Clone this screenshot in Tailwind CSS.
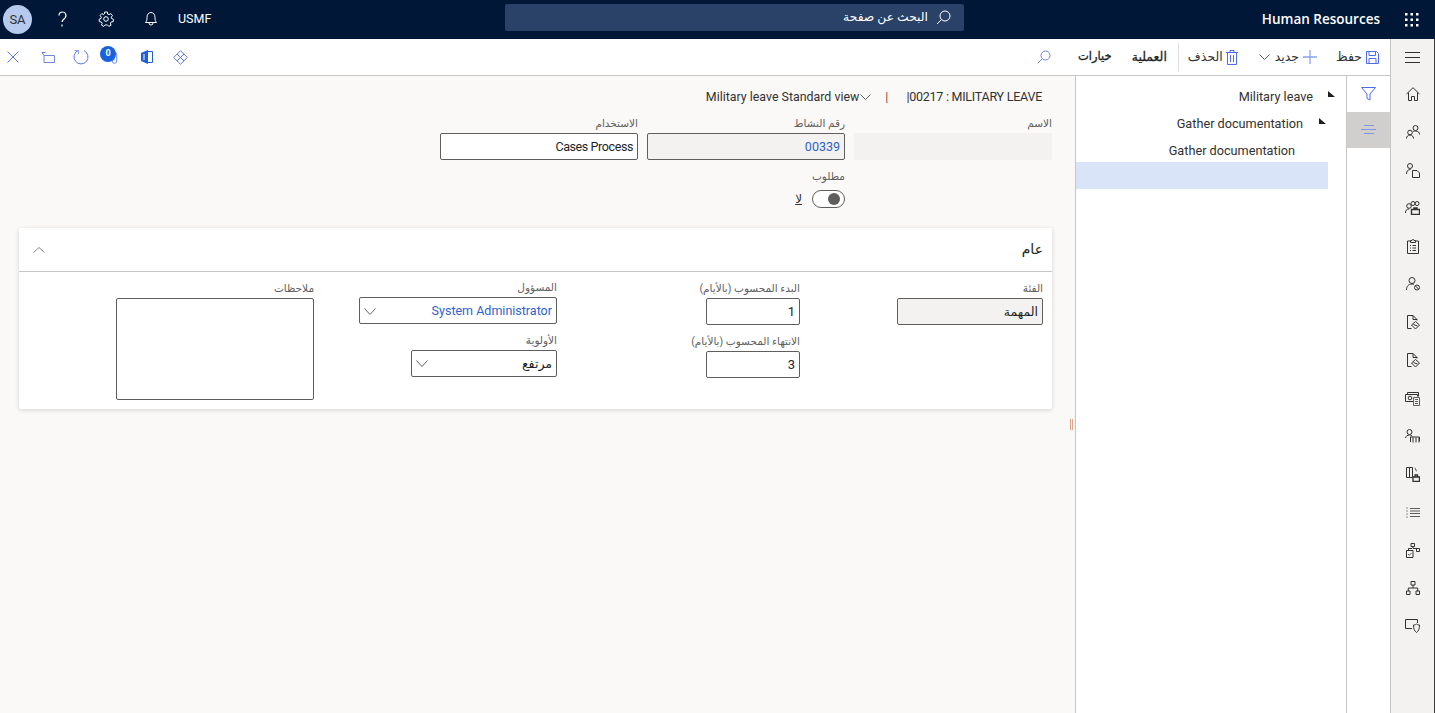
<!doctype html>
<html lang="ar">
<head>
<meta charset="utf-8">
<script src="https://cdn.jsdelivr.net/npm/@tailwindcss/browser@4"></script>
<title>Human Resources</title>
</head>
<body class="m-0 overflow-hidden bg-white font-['Roboto','DejaVu_Sans',sans-serif] text-[13px] text-[#323130]">
<div class="flex h-[713px] w-[1435px] flex-col overflow-hidden">

  <!-- top bar -->
  <header class="relative flex h-[39px] shrink-0 items-center bg-[#001737] text-white">
    <div class="ml-[3px] flex h-[29px] w-[29px] items-center justify-center rounded-full bg-[#b6c9ef] text-[13px] text-[#323130]">SA</div>
    <svg class="mb-[1px] ml-[24px] h-[16px] w-[12px]" viewBox="0 0 12 16" fill="none" stroke="currentColor" stroke-width="1.200"><path d="M3 4.500C3 2 4.500 1 6.500 1c3 0 4.300 3 2.800 5.500C8.300 8 6 9 6 11"/><path d="M6 13.500v2"/></svg>
    <svg class="mb-[1px] ml-[30px] h-[16px] w-[16px]" viewBox="0 0 16 16" fill="none" stroke="currentColor"><circle cx="8" cy="8" r="2.300"/><path d="M6.700 1h2.600l.4 2 1.300.6 1.800-1 1.700 2-1.200 1.500.3 1.400 1.900.8-.3 2.400-2 .3-.8 1.200.6 2-2.200 1.200-1.400-1.500H7.200l-1.400 1.500-2.200-1.200.6-2-.8-1.200-2-.3L1.100 8.300 3 7.500l.3-1.400L2.100 4.600l1.700-2 1.800 1L6.300 3z"/></svg>
    <svg class="mb-[2px] ml-[31px] h-[15px] w-[12px]" viewBox="0 0 12 15" fill="none" stroke="currentColor"><path d="M.5 11.500h11c-1.200-1.300-1.500-2.500-1.500-5 0-3-1.500-5-4-5s-4 2-4 5c0 2.500-.3 3.700-1.500 5z"/><path d="M4 11.500v.5a2 2 0 0 0 4 0v-.5"/></svg>
    <span class="ml-[21px] text-[12.500px]">USMF</span>
    <div class="absolute left-[505px] top-[4px] flex h-[27px] w-[459px] items-center justify-end gap-[8px] rounded-[2px] bg-[#2a4268] pr-[13px]" dir="ltr">
      <span dir="rtl" class="text-[12.300px] leading-none">البحث عن صفحة</span>
      <svg class="h-[15px] w-[15px]" viewBox="0 0 15 15" fill="none" stroke="currentColor"><circle cx="9" cy="6" r="5"/><path d="M5.500 9.500 1 14"/></svg>
    </div>
    <span class="ml-auto font-['Open_Sans'] text-[13.500px] font-semibold">Human Resources</span>
    <svg class="ml-[25px] mr-[16px] h-[14px] w-[14px]" viewBox="0 0 14 14" fill="currentColor"><rect x="0" y="0" width="2.500" height="2.500"/><rect x="5.500" y="0" width="2.500" height="2.500"/><rect x="11" y="0" width="2.500" height="2.500"/><rect x="0" y="5.500" width="2.500" height="2.500"/><rect x="5.500" y="5.500" width="2.500" height="2.500"/><rect x="11" y="5.500" width="2.500" height="2.500"/><rect x="0" y="11" width="2.500" height="2.500"/><rect x="5.500" y="11" width="2.500" height="2.500"/><rect x="11" y="11" width="2.500" height="2.500"/></svg>
  </header>

  <div class="flex min-h-0 flex-1">
    <div class="flex min-w-0 flex-1 flex-col">

      <!-- command bar -->
      <div class="flex h-[37px] shrink-0 items-center border-b border-[#c8c6c4] bg-white">
        <div class="flex items-center pl-[7px] text-[#4f6bed]">
          <svg class="h-[12px] w-[12px]" viewBox="0 0 12 12" fill="none" stroke="#5b78e5"><path d="M.5.500l11 11M11.500.500l-11 11"/></svg>
          <svg class="ml-[22px] h-[11px] w-[14px]" viewBox="0 0 14 11" fill="none" stroke="#6e86dd"><path d="M3 3.500h10.500v7H3z"/><path d="M3 3.500 1 .5h3.500" stroke="#5b78e5"/></svg>
          <svg class="ml-[18px] h-[16px] w-[16px]" viewBox="0 0 16 16" fill="none" stroke="#5b78e5"><path d="M5 1.600A7 7 0 1 0 11 1.600"/><path d="M5.500 1v4M1.500 1.500h4" stroke="#8ea2ec"/></svg>
          <div class="relative ml-[11px] h-[20px] w-[20px]">
            <span class="absolute left-0 top-[-1px] z-10 flex h-[16px] w-[16px] items-center justify-center rounded-full bg-[#1a62dc] text-[9px] font-bold text-white">0</span>
            <svg class="absolute left-[11px] top-[5px] h-[13px] w-[7px]" viewBox="0 0 8 14" fill="none" stroke="#5b78e5"><path d="M1.500 2v8a2.500 2.500 0 0 0 5 0V2a1.500 1.500 0 0 0-3 0v7"/></svg>
          </div>
          <svg class="ml-[21px] h-[14px] w-[12px]" viewBox="0 0 12 14"><path d="M0 3 7 0v14L0 11z" fill="#1f5fd6"/><path d="M7 1.500h4.500v11H7" fill="none" stroke="#1f5fd6"/><path d="M3 4v6" stroke="#fff"/></svg>
          <svg class="ml-[20px] h-[15px] w-[15px]" viewBox="0 0 15 15" fill="none" stroke="#5b78e5"><path d="M7.500.7 14.300 7.500 7.500 14.300.7 7.500z"/><path d="M4 4l7 7M11 4l-3 3M4 11l3-3"/></svg>
        </div>
        <div dir="rtl" class="ml-auto flex items-center pr-[11px]">
          <svg class="h-[13px] w-[13px]" viewBox="0 0 13 13" fill="none" stroke="#4f6bed"><path d="M.5.500h10l2 2v10H.5z"/><path d="M3 .5v4h6.500v-4M3 12.500v-5h7v5"/></svg>
          <span class="mr-[4px] text-[12.500px] leading-none">حفظ</span>
          <svg class="mr-[19px] h-[14px] w-[14px]" viewBox="0 0 14 14" stroke="#8aa3ee" fill="none" stroke-width="1.300"><path d="M7 0v14M0 7h14"/></svg>
          <span class="mr-[4px] text-[12.500px] leading-none">جديد</span>
          <svg class="mr-[5px] h-[6px] w-[11px]" viewBox="0 0 11 6" fill="none" stroke="#605e5c"><path d="M.5.500l5 5 5-5"/></svg>
          <svg class="mr-[21px] h-[15px] w-[12px]" viewBox="0 0 12 15" fill="none" stroke="#4f6bed"><path d="M0 2.500h12M4 2.500V.5h4v2M1.500 2.500h9v12h-9zM4.500 5v7M7.500 5v7"/></svg>
          <span class="mr-[3px] text-[12.500px] leading-none">الحذف</span>
          <span class="mr-[9px] h-[29px] w-px bg-[#e1dfdd]"></span>
          <span class="mr-[11px] text-[12.500px] leading-none text-[#201f1e] [-webkit-text-stroke:0.3px_#201f1e]">العملية</span>
          <span class="mr-[20px] text-[11.500px] leading-none text-[#201f1e] [-webkit-text-stroke:0.3px_#201f1e]">خيارات</span>
          <svg class="mr-[27px] h-[14px] w-[14px]" viewBox="0 0 14 14" fill="none" stroke="#6e86dd"><circle cx="8.500" cy="5.500" r="4.500"/><path d="M5 9 .7 13.300"/></svg>
        </div>
      </div>

      <div class="flex min-h-0 flex-1">
        <!-- main form -->
        <main dir="rtl" class="relative w-[1075px] shrink-0 bg-[#faf9f8] pr-[23px]">
          <div class="flex h-[40px] items-center pr-[10px] pt-[2px] text-[12.500px]">
            <span dir="ltr" class="tracking-[-0.25px]">|00217 : MILITARY LEAVE</span>
            <span class="mr-[18px] text-[#8a4a3a]">|</span>
            <span dir="ltr" class="mr-[14px] flex items-center gap-[1px] text-[12.400px]">Military leave Standard view
              <svg class="h-[6px] w-[11px]" viewBox="0 0 11 6" fill="none" stroke="#605e5c"><path d="M.5.500l5 5 5-5"/></svg>
            </span>
          </div>

          <div class="flex gap-[9px]">
            <div class="w-[198px]">
              <div class="h-[17px] text-[10.500px] leading-[16px] text-[#605e5c]">الاسم</div>
              <div class="h-[27px] w-[198px] bg-[#f3f2f1]"></div>
            </div>
            <div class="w-[198px]">
              <div class="h-[17px] text-[10.500px] leading-[16px] text-[#605e5c]">رقم النشاط</div>
              <div dir="ltr" class="flex h-[27px] items-center justify-end rounded-[2px] border border-[#605e5c] bg-[#f3f2f1] px-[4px] pt-[1px] text-[12.500px] text-[#2f5fd0]">00339</div>
            </div>
            <div class="w-[198px]">
              <div class="h-[17px] text-[10.500px] leading-[16px] text-[#605e5c]">الاستخدام</div>
              <div dir="ltr" class="flex h-[27px] items-center justify-end rounded-[2px] border border-[#605e5c] bg-white px-[4px] pt-[1px] text-[12.500px] tracking-[-0.4px] text-[#201f1e]">Cases Process</div>
            </div>
          </div>

          <div class="mr-[207px] mt-[9px]">
            <div class="h-[21px] text-[10.500px] leading-[16px] text-[#605e5c]">مطلوب</div>
            <div class="flex items-center gap-[10px]">
              <div class="flex h-[18px] w-[33px] items-center rounded-full border border-[#605e5c] bg-white pr-[4px]">
                <span class="h-[12px] w-[12px] rounded-full bg-[#605e5c]"></span>
              </div>
              <span class="text-[12px] underline">لا</span>
            </div>
          </div>

          <section class="mt-[20px] h-[181px] w-[1033px] rounded-[2px] bg-white shadow-[0_1px_4px_rgba(0,0,0,0.16)]">
            <div class="flex h-[44px] items-center justify-between border-b border-[#c8c6c4] pl-[14px] pr-[9px]">
              <span class="text-[14px] text-[#201f1e]">عام</span>
              <svg class="h-[6px] w-[12px]" viewBox="0 0 12 6" fill="none" stroke="#8a8886"><path d="M.5 5.500l5.500-5 5.500 5"/></svg>
            </div>
            <div class="flex gap-[45px] pr-[9px] pt-[8px]">
              <div class="w-[198px]">
                <div class="h-[18px] text-[10.500px] leading-[18px] text-[#605e5c]">الفئة</div>
                <div class="flex h-[27px] w-[146px] items-center rounded-[2px] border border-[#605e5c] bg-[#f3f2f1] px-[4px] pt-[1px] text-[12.500px] text-[#201f1e]">المهمة</div>
              </div>
              <div class="w-[198px]">
                <div class="h-[18px] text-[10.500px] leading-[18px] text-[#605e5c]">البدء المحسوب (بالأيام)</div>
                <div dir="ltr" class="flex h-[27px] w-[94px] items-center justify-end rounded-[2px] border border-[#605e5c] bg-white px-[4px] pt-[1px] text-[13px] text-[#201f1e]">1</div>
                <div class="mt-[8px] h-[18px] text-[10.500px] leading-[18px] text-[#605e5c]">الانتهاء المحسوب (بالأيام)</div>
                <div dir="ltr" class="flex h-[27px] w-[94px] items-center justify-end rounded-[2px] border border-[#605e5c] bg-white px-[4px] pt-[1px] text-[13px] text-[#201f1e]">3</div>
              </div>
              <div class="w-[198px]">
                <div class="h-[17px] text-[10.500px] leading-[16px] text-[#605e5c]">المسؤول</div>
                <div dir="ltr" class="flex h-[27px] items-center justify-between rounded-[2px] border border-[#605e5c] bg-white pl-[4px] pr-[4px] pt-[1px] text-[12.500px] text-[#2f5fd0]">
                  <svg class="h-[7px] w-[12px]" viewBox="0 0 12 7" fill="none" stroke="#605e5c"><path d="M.5.500l5.500 6 5.500-6"/></svg>
                  <span>System Administrator</span>
                </div>
                <div class="mt-[9px] h-[17px] text-[10.500px] leading-[16px] text-[#605e5c]">الأولوية</div>
                <div dir="ltr" class="flex h-[27px] w-[146px] items-center justify-between rounded-[2px] border border-[#605e5c] bg-white px-[4px] text-[12.500px] text-[#201f1e]">
                  <svg class="h-[7px] w-[12px]" viewBox="0 0 12 7" fill="none" stroke="#605e5c"><path d="M.5.500l5.500 6 5.500-6"/></svg>
                  <span dir="rtl" class="pt-[2px]">مرتفع</span>
                </div>
              </div>
              <div class="w-[198px]">
                <div class="h-[18px] text-[10.500px] leading-[18px] text-[#605e5c]">ملاحظات</div>
                <div class="h-[102px] rounded-[2px] border border-[#605e5c] bg-white"></div>
              </div>
            </div>
          </section>

          <div class="absolute left-[1070px] top-[343px] flex gap-[1px]">
            <span class="h-[11px] w-[1px] bg-[#e2a68c]"></span><span class="h-[11px] w-[1px] bg-[#e2a68c]"></span>
          </div>
        </main>

        <!-- tree panel -->
        <aside class="w-[271px] shrink-0 border-l border-[#c8c6c4] bg-white pt-[5px] text-[12.700px]">
          <div class="flex h-[27px] items-center justify-end pr-[11px] pt-[4px]">
            <span>Military leave</span>
            <svg class="mb-[6px] ml-[15px] h-[6px] w-[7px]" viewBox="0 0 7 6" fill="#201f1e"><path d="M0 0 7 6H0z"/></svg>
          </div>
          <div class="flex h-[27px] items-center justify-end pr-[20px] pt-[4px]">
            <span>Gather documentation</span>
            <svg class="mb-[6px] ml-[16px] h-[6px] w-[7px]" viewBox="0 0 7 6" fill="#201f1e"><path d="M0 0 7 6H0z"/></svg>
          </div>
          <div class="flex h-[27px] items-center justify-end pr-[51px] pt-[4px]">
            <span>Gather documentation</span>
          </div>
          <div class="h-[27px] w-[252px] bg-[#d9e4f9]"></div>
        </aside>

        <!-- side tabs -->
        <div class="w-[44px] shrink-0 border-l border-[#c8c6c4] bg-white">
          <div class="flex h-[36px] items-center justify-center">
            <svg class="h-[14px] w-[15px]" viewBox="0 0 15 14" fill="none" stroke="#4f6bed"><path d="M.5.500h14L9 7v6L6 11.500V7z"/></svg>
          </div>
          <div class="flex h-[36px] items-center justify-center bg-[#d0cfce]">
            <svg class="h-[10px] w-[15px]" viewBox="0 0 15 10" fill="none" stroke="#7f95e8"><path d="M3 .5h10M0 4.500h15M3 8.500h10"/></svg>
          </div>
        </div>
      </div>
    </div>

    <!-- nav rail -->
    <nav class="flex w-[45px] shrink-0 flex-col items-center border-l border-r border-l-[#c8c6c4] border-r-[#3b3a39] bg-[#f3f2f1] text-[#323130]">
      <div class="flex h-[36px] w-full items-center justify-center">
        <svg class="h-[11px] w-[15px]" viewBox="0 0 15 11" fill="none" stroke="currentColor"><path d="M0 .5h15M0 5.500h15M0 10.500h15"/></svg>
      </div>
      <div class="flex h-[38px] items-center justify-center">
        <svg class="h-[14px] w-[14px]" viewBox="0 0 14 14" fill="none" stroke="currentColor"><path d="M.5 7 7 .7 13.500 7M2.500 5.500v8h3v-4h3v4h3v-8"/></svg>
      </div>
      <div class="flex h-[38px] items-center justify-center">
        <svg class="h-[14px] w-[14px]" viewBox="0 0 14 14" fill="none" stroke="currentColor"><circle cx="9.500" cy="3" r="2.500"/><circle cx="4" cy="7.500" r="2.300"/><path d="M.5 13.500c0-2 1.500-3.500 3.500-3.500s3.500 1.500 3.500 3.500M7 6.500c2-1 4-.5 5.500.5.800.6 1 1.500 1 2.500"/></svg>
      </div>
      <div class="flex h-[38px] items-center justify-center">
        <svg class="h-[15px] w-[14px]" viewBox="0 0 14 15" fill="none" stroke="currentColor"><circle cx="4" cy="3" r="2.500"/><path d="M.5 11c0-3 1.500-4.500 4-4.500M6.500 7.500H11l2.500 2.500v4.500h-7z"/></svg>
      </div>
      <div class="flex h-[38px] items-center justify-center">
        <svg class="h-[14px] w-[15px]" viewBox="0 0 15 14" fill="none" stroke="currentColor"><circle cx="4" cy="5" r="2.300"/><circle cx="8" cy="2.500" r="2"/><circle cx="12" cy="2.500" r="2"/><path d="M.5 12c0-2.500 1-4 3.500-4"/><path d="M6.500 8.500h8v5h-8zM9 8.500V7h3v1.500" stroke-width="1.400"/></svg>
      </div>
      <div class="flex h-[38px] items-center justify-center">
        <svg class="h-[15px] w-[12px]" viewBox="0 0 12 15" fill="none" stroke="currentColor"><path d="M3.500 2H.5v12.500h11V2h-3"/><path d="M3.500 3.500V1.500h1.500a1 1 0 0 1 2 0h1.500v2z"/><path d="M3 6.500h1M5.500 6.500H9M3 9h1M5.500 9H9M3 11.500h1M5.500 11.500H9"/></svg>
      </div>
      <div class="flex h-[38px] items-center justify-center">
        <svg class="h-[14px] w-[14px]" viewBox="0 0 14 14" fill="none" stroke="currentColor"><circle cx="6" cy="3.500" r="3"/><path d="M.5 13c0-3.500 2-6 5.500-6 1 0 1.500.2 2 .5"/><circle cx="11" cy="10.500" r="2.500"/><path d="M9.500 9l3 3"/></svg>
      </div>
      <div class="flex h-[38px] items-center justify-center">
        <svg class="h-[15px] w-[14px]" viewBox="0 0 14 15" fill="none" stroke="currentColor"><path d="M5.500 13.500h-4V.5H7l4 4v1M7 .5v4h4"/><path d="M9.500 6.500l4 3.500-4 4-4-4zM7.500 9.500l4 1.500" /></svg>
      </div>
      <div class="flex h-[38px] items-center justify-center">
        <svg class="h-[15px] w-[14px]" viewBox="0 0 14 15" fill="none" stroke="currentColor"><path d="M5.500 13.500h-4V.5H7l4 4v1M7 .5v4h4"/><path d="M9.500 6.500l4 3.500-4 4-4-4zM7.500 9.500l4 1.500" /></svg>
      </div>
      <div class="flex h-[38px] items-center justify-center">
        <svg class="h-[15px] w-[15px]" viewBox="0 0 15 15" fill="none" stroke="currentColor"><path d="M8 10.500H.5v-7h12v2"/><path d="M2.500 3.500v-2h11v4"/><circle cx="5" cy="7" r="1.800"/><path d="M8.500 6.500h6v8h-6zM10 8.500h3M10 10.500h3M10 12.500h3" stroke="#605e5c"/></svg>
      </div>
      <div class="flex h-[38px] items-center justify-center">
        <svg class="h-[14px] w-[15px]" viewBox="0 0 15 14" fill="none" stroke="currentColor"><circle cx="4.500" cy="3" r="2.500"/><path d="M.5 9c.5-2 2-3 4-3 1.500 0 2.500.5 3 1.500M5 8h9.500v4M5.500 8v5M8 8.500v5M11 8.500v5M14 8.500v5"/></svg>
      </div>
      <div class="flex h-[38px] items-center justify-center">
        <svg class="h-[15px] w-[14px]" viewBox="0 0 14 15" fill="none" stroke="currentColor"><path d="M.5.500h3v10h-3zM3.500.5h3v10h-3z"/><path d="M9 .8l1.500 3.500" stroke="#605e5c"/><path d="M7 10h6.500v4.500H7zM9 10V8h2.500v2" stroke-width="1.300"/></svg>
      </div>
      <div class="flex h-[38px] items-center justify-center">
        <svg class="h-[11px] w-[14px]" viewBox="0 0 14 11" fill="none" stroke="currentColor"><path d="M4 1.500h10M4 4h10M4 6.500h10M4 9.500h10" stroke="#605e5c"/><path d="M.5 1h2M.5 4h1.500M.5 7h2M.5 10h2" stroke-dasharray="1 1"/></svg>
      </div>
      <div class="flex h-[38px] items-center justify-center">
        <svg class="h-[15px] w-[14px]" viewBox="0 0 14 15" fill="none" stroke="currentColor"><path d="M5 .5h3.500v3H5zM10.500 5.500h3v3h-3zM.5 7.500h6.500v7H.5zM7 3.500v2h5v0M2.500 7.500V5.500H6"/><path d="M2 11l1.300 1.300L5.500 10" stroke="#605e5c"/></svg>
      </div>
      <div class="flex h-[38px] items-center justify-center">
        <svg class="h-[14px] w-[14px]" viewBox="0 0 14 14" fill="none" stroke="currentColor"><path d="M5 .5h4v3.500H5zM.5 10h3.500v3.500H.5zM10 10h3.500v3.500H10zM7 4v3M2.300 10V7h9.400v3"/></svg>
      </div>
      <div class="flex h-[38px] items-center justify-center">
        <svg class="h-[14px] w-[15px]" viewBox="0 0 15 14" fill="none" stroke="currentColor"><path d="M7 9.500H.5v-9h12V4"/><path d="M8.500 6c1.500 0 2.500-.5 3-1 .5.500 1.500 1 3 1 0 4-1 6-3 7.500-2-1.500-3-3.500-3-7.500z"/></svg>
      </div>
    </nav>
  </div>
</div>
</body>
</html>
